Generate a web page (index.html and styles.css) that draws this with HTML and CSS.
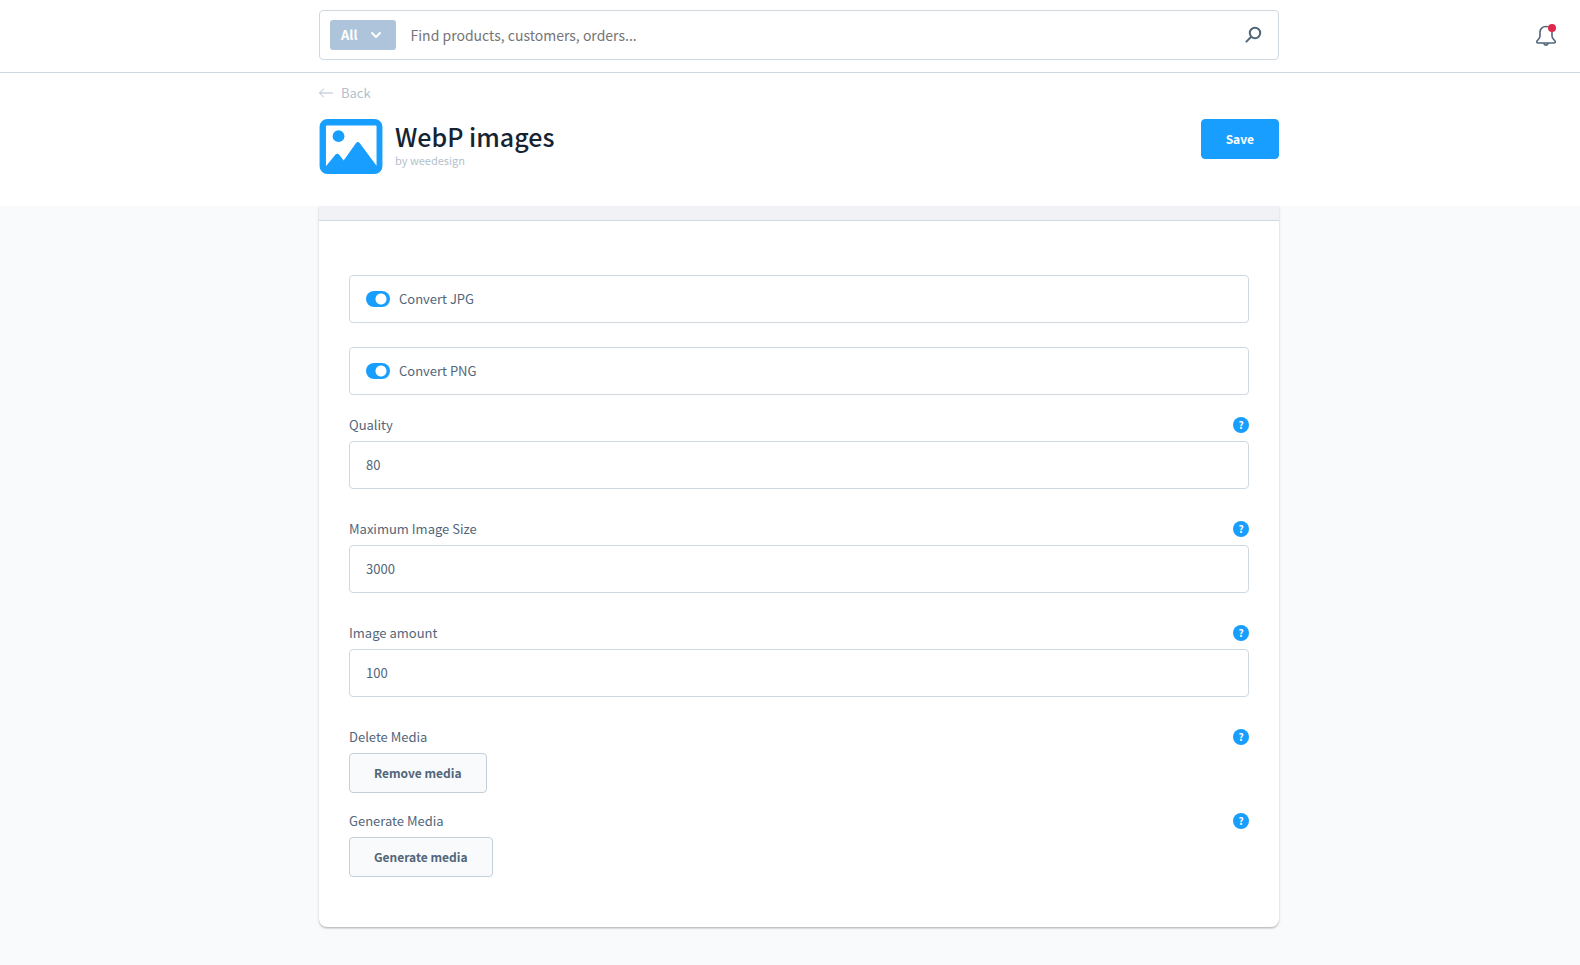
FILE: index.html
```html
<!DOCTYPE html>
<html lang="en">
<head>
<meta charset="utf-8">
<title>WebP images</title>
<link rel="stylesheet" href="styles.css">
</head>
<body>
<header class="topbar">
  <form class="search column" role="search">
    <button class="search-type" type="button">All
      <svg width="12" height="8" viewBox="0 0 12 8" fill="none" stroke="currentColor" stroke-width="2" stroke-linecap="round" stroke-linejoin="round"><path d="M2 2l4 4 4-4"/></svg>
    </button>
    <input class="search-input" type="text" placeholder="Find products, customers, orders..." aria-label="Search">
    <button class="icon-button" type="submit" aria-label="Search">
      <svg width="18" height="18" viewBox="0 0 18 18" fill="none" stroke="currentColor" stroke-width="2" stroke-linecap="round"><circle cx="11" cy="7" r="5.2"/><path d="M7.2 10.8L2.4 15.6"/></svg>
    </button>
  </form>
  <button class="icon-button bell" type="button" aria-label="Notifications">
    <svg width="22" height="24" viewBox="0 0 22 24" fill="none" stroke="currentColor" stroke-width="1.6" stroke-linejoin="round"><path d="M11 3.500c-3.600 0-6 2.500-6 5.800v3.700c0 1.700-.6 2.600-1.800 3.600-1 .8-1.500 1.300-1.500 2.200 0 .8.500 1.200 1.300 1.200h16c.8 0 1.300-.4 1.300-1.200 0-.9-.5-1.400-1.500-2.200-1.200-1-1.800-1.900-1.800-3.600V9.300c0-3.300-2.400-5.800-6-5.800z"/><path d="M8.800 20.200c.2 1.200 1 1.900 2.200 1.900s2-.7 2.200-1.900"/><circle cx="17" cy="5" r="4" fill="#de294c" stroke="none"/></svg>
  </button>
</header>
<section class="page-head">
  <div class="column">
    <a class="back" href="#">
      <svg width="14" height="10" viewBox="0 0 14 10" fill="none" stroke="currentColor" stroke-linecap="round" stroke-linejoin="round"><path d="M13.500 5H.8M4.500 1L.6 5l3.900 4"/></svg>
      Back
    </a>
    <div class="title-row">
      <svg class="plugin-icon" width="64" height="55" viewBox="0 0 64 56"><path fill="#189eff" fill-rule="evenodd" d="M8 0h48a8 8 0 0 1 8 8v40a8 8 0 0 1-8 8H8a8 8 0 0 1-8-8V8a8 8 0 0 1 8-8zM7.500 6.500a1 1 0 0 0-1 1V48L16 36.500q2-2.200 4 0l4.500 5.800L37 24.600q2-2.600 4 0L58 47.500V7.500a1 1 0 0 0-1-1z"/><circle cx="19.300" cy="17.500" r="6" fill="#189eff"/></svg>
      <div class="titles">
        <h1>WebP images</h1>
        <p>by weedesign</p>
      </div>
      <button class="button primary" type="button">Save</button>
    </div>
  </div>
</section>
<main class="content">
  <form class="card column">
    <div class="card-head"></div>
    <div class="card-body">
      <label class="switch-box"><input type="checkbox" class="switch" checked>Convert JPG</label>
      <label class="switch-box"><input type="checkbox" class="switch" checked>Convert PNG</label>
      <div class="field">
        <div class="field-head"><label for="quality">Quality</label><button type="button" class="help" aria-label="Help">?</button></div>
        <input class="text-input" id="quality" type="text" value="80">
      </div>
      <div class="field">
        <div class="field-head"><label for="size">Maximum Image Size</label><button type="button" class="help" aria-label="Help">?</button></div>
        <input class="text-input" id="size" type="text" value="3000">
      </div>
      <div class="field">
        <div class="field-head"><label for="amount">Image amount</label><button type="button" class="help" aria-label="Help">?</button></div>
        <input class="text-input" id="amount" type="text" value="100">
      </div>
      <div class="field action">
        <div class="field-head"><label for="remove">Delete Media</label><button type="button" class="help" aria-label="Help">?</button></div>
        <button class="button" id="remove" type="button">Remove media</button>
      </div>
      <div class="field action">
        <div class="field-head"><label for="generate">Generate Media</label><button type="button" class="help" aria-label="Help">?</button></div>
        <button class="button" id="generate" type="button">Generate media</button>
      </div>
    </div>
  </form>
</main>
</body>
</html>
```
FILE: styles.css
```css
* { box-sizing: border-box; }

body {
  margin: 0;
  min-height: 100vh;
  background: #f9fafb;
  color: #52667a;
  font-family: "Noto Sans CJK SC", "Open Sans", sans-serif;
  font-size: 13px;
  line-height: 16px;
}

button, input { font: inherit; color: inherit; margin: 0; }
button { cursor: pointer; }
svg { flex: none; }

.column { width: 100%; max-width: 960px; margin: 0 auto; }

.topbar {
  display: grid;
  grid-template-columns: minmax(0, 1fr) 42px;
  align-items: center;
  padding: 10px 17px 12px 77px;
  background: #fff;
  border-bottom: 1px solid #d1d9e0;
}
.search {
  display: flex;
  align-items: center;
  height: 50px;
  padding: 0 16px 0 10px;
  border: 1px solid #d1d9e0;
  border-radius: 4px;
  background: #fff;
}
.search-type {
  display: flex;
  align-items: center;
  gap: 12px;
  height: 30px;
  padding: 0 14px 0 11px;
  border: 0;
  border-radius: 3px;
  background: #aec4da;
  color: #fff;
  font-weight: 700;
}
.search-input {
  flex: 1;
  min-width: 0;
  height: 30px;
  padding: 0 15px;
  border: 0;
  outline: 0;
  background: none;
  font-size: 14px;
}
.search-input::placeholder { color: #757575; opacity: 1; }
.icon-button {
  display: flex;
  padding: 0;
  border: 0;
  background: none;
  color: #52667a;
}
.bell { justify-self: end; margin-right: 6px; }

.page-head {
  padding: 12px 0 32px 18px;
  background: #fff;
}
.back {
  display: inline-flex;
  align-items: center;
  gap: 8px;
  height: 16px;
  color: #b3bfcc;
  text-decoration: none;
}
.title-row { display: flex; align-items: flex-start; margin-top: 18px; }
.titles { flex: 1; margin-left: 12px; }
h1 {
  margin: 0;
  color: #142433;
  font-size: 25px;
  font-weight: 500;
  line-height: 34px;
}
.titles p { margin: 0; color: #b3bfcc; font-size: 11px; line-height: 14px; }

.button {
  height: 40px;
  padding: 0 24px;
  border: 1px solid #c3cfdb;
  border-radius: 4px;
  background: #f9fafb;
  font-size: 12px;
  font-weight: 700;
}
.primary { border-color: #189eff; background: #189eff; color: #fff; }

.content { overflow: hidden; padding: 0 0 38px 18px; }
.card {
  border-radius: 0 0 8px 8px;
  background: #fff;
  box-shadow: 0 1px 1px rgba(0, 0, 0, .08), 0 2px 1px rgba(0, 0, 0, .06), 0 1px 3px rgba(0, 0, 0, .16);
}
.card-head { height: 15px; border-bottom: 1px solid #d1d9e0; background: #f0f2f5; }
.card-body { padding: 54px 30px 50px; }

.switch-box {
  display: flex;
  align-items: center;
  gap: 9px;
  height: 48px;
  margin-bottom: 24px;
  padding: 0 16px;
  border: 1px solid #d1d9e0;
  border-radius: 4px;
}
.switch {
  appearance: none;
  width: 24px;
  height: 16px;
  border-radius: 8px;
  background: radial-gradient(circle at 15px 8px, #fff 5px, #189eff 6px);
}
.switch-box + .field { margin-top: -2px; }
.field { margin-bottom: 32px; }
.action { margin-bottom: 20px; }
.action:last-child { margin-bottom: 0; }
.field-head {
  display: flex;
  align-items: center;
  justify-content: space-between;
  margin-bottom: 8px;
}
.help {
  width: 16px;
  height: 16px;
  padding: 0;
  border: 0;
  border-radius: 50%;
  background: #189eff;
  color: #fff;
  font-size: 10px;
  font-weight: 700;
  line-height: 16px;
}
.text-input {
  display: block;
  width: 100%;
  height: 48px;
  padding: 0 16px 2px;
  border: 1px solid #d1d9e0;
  border-radius: 4px;
  background: #fff;
}
```
